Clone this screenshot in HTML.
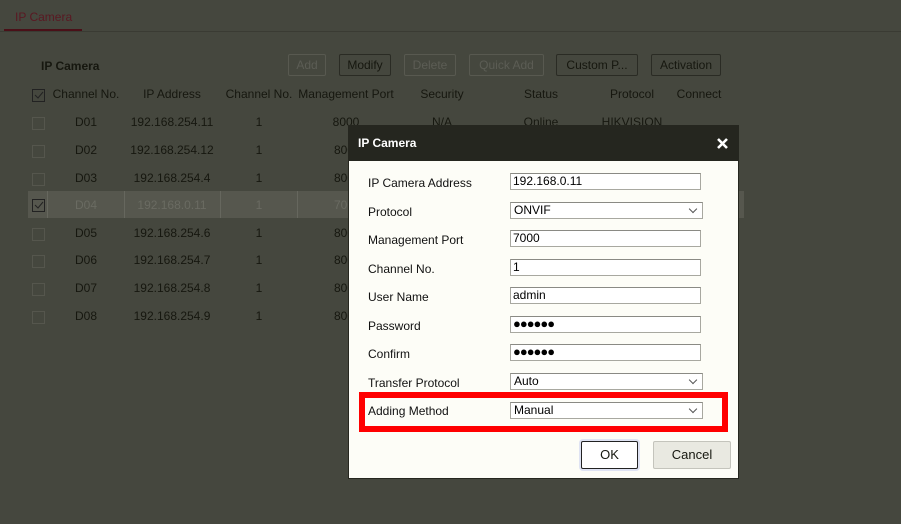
<!DOCTYPE html>
<html><head><style>
*{margin:0;padding:0;box-sizing:border-box}
body{width:901px;height:524px;background:#45473e;font-family:"Liberation Sans",sans-serif;font-size:12px;color:#16170f;position:relative;overflow:hidden}
.a{position:absolute;white-space:nowrap}
.c{position:absolute;transform:translateX(-50%);white-space:nowrap}
.btn{position:absolute;height:22px;top:54px;border:1px solid #2a2b24;border-radius:2px;text-align:center;line-height:20px;font-size:12px}
.dis{border-color:#585950;color:#5c5d55}
.cb{position:absolute;left:32px;width:13px;height:13px;border:1px solid #393a32}
.inp{position:absolute;left:510px;width:191px;height:17px;border:1px solid #a8a8a0;border-top-color:#8a8a84;background:#fff;font-size:12px;line-height:15px;padding-left:2px;color:#000}
.sel{width:193px;padding-left:3px}
.sel::after{content:"";position:absolute;right:6px;top:3px;width:5px;height:5px;border-right:1px solid #555;border-bottom:1px solid #555;transform:rotate(45deg)}
.lbl{position:absolute;left:368px;font-size:12px;color:#111}
.dots{font-size:13px;letter-spacing:-1px;font-weight:bold;line-height:14px}
</style></head><body>
<div class="a" style="left:15px;top:10px;color:#5a1822;font-size:12px">IP Camera</div>
<div class="a" style="left:0;top:31px;width:901px;height:1px;background:#3a3b33"></div>
<div class="a" style="left:4px;top:29px;width:78px;height:2px;background:#4a1018"></div>

<div class="a" style="left:41px;top:59px;font-weight:bold">IP Camera</div>
<div class="btn dis" style="left:288px;width:38px">Add</div>
<div class="btn" style="left:339px;width:52px">Modify</div>
<div class="btn dis" style="left:404px;width:52px">Delete</div>
<div class="btn dis" style="left:469px;width:75px">Quick Add</div>
<div class="btn" style="left:556px;width:82px">Custom P...</div>
<div class="btn" style="left:651px;width:70px">Activation</div>

<div class="cb" style="top:89px;border-color:#222"><svg width="11" height="11" style="position:absolute;left:0;top:0"><path d="M2 5 L5 8 L10 2" stroke="#222" fill="none"/></svg></div>
<div class="c" style="left:86px;top:87px">Channel No.</div>
<div class="c" style="left:172px;top:87px">IP Address</div>
<div class="c" style="left:259px;top:87px">Channel No.</div>
<div class="c" style="left:346px;top:87px">Management Port</div>
<div class="c" style="left:442px;top:87px">Security</div>
<div class="c" style="left:541px;top:87px">Status</div>
<div class="c" style="left:632px;top:87px">Protocol</div>
<div class="c" style="left:699px;top:87px">Connect</div>

<div class="a" style="left:28px;top:191px;width:716px;height:27px;background:#56574e"></div>
<div class="a" style="left:47px;top:191px;width:1px;height:27px;background:#66675e"></div>
<div class="a" style="left:124px;top:191px;width:1px;height:27px;background:#66675e"></div>
<div class="a" style="left:220px;top:191px;width:1px;height:27px;background:#66675e"></div>
<div class="a" style="left:297px;top:191px;width:1px;height:27px;background:#66675e"></div>

<div class="cb" style="top:117px;border-color:#55564d"></div>
<div class="c" style="left:86px;top:115px">D01</div><div class="c" style="left:172px;top:115px">192.168.254.11</div><div class="c" style="left:259px;top:115px">1</div><div class="c" style="left:346px;top:115px">8000</div><div class="c" style="left:442px;top:115px">N/A</div><div class="c" style="left:541px;top:115px">Online</div><div class="c" style="left:632px;top:115px">HIKVISION</div>
<div class="cb" style="top:145px;border-color:#55564d"></div>
<div class="c" style="left:86px;top:143px">D02</div><div class="c" style="left:172px;top:143px">192.168.254.12</div><div class="c" style="left:259px;top:143px">1</div><div class="a" style="left:334px;top:143px">8000</div>
<div class="cb" style="top:173px;border-color:#55564d"></div>
<div class="c" style="left:86px;top:171px">D03</div><div class="c" style="left:172px;top:171px">192.168.254.4</div><div class="c" style="left:259px;top:171px">1</div><div class="a" style="left:334px;top:171px">8000</div>
<div class="cb" style="top:199px;border-color:#222"><svg width="11" height="11" style="position:absolute;left:0;top:0"><path d="M2 5 L5 8 L10 2" stroke="#222" fill="none"/></svg></div>
<div class="c" style="left:86px;top:198px;color:#6a6b62">D04</div><div class="c" style="left:172px;top:198px;color:#6a6b62">192.168.0.11</div><div class="c" style="left:259px;top:198px;color:#6a6b62">1</div><div class="a" style="left:334px;top:198px;color:#6a6b62">7000</div>
<div class="cb" style="top:228px;border-color:#55564d"></div>
<div class="c" style="left:86px;top:226px">D05</div><div class="c" style="left:172px;top:226px">192.168.254.6</div><div class="c" style="left:259px;top:226px">1</div><div class="a" style="left:334px;top:226px">8000</div>
<div class="cb" style="top:255px;border-color:#55564d"></div>
<div class="c" style="left:86px;top:253px">D06</div><div class="c" style="left:172px;top:253px">192.168.254.7</div><div class="c" style="left:259px;top:253px">1</div><div class="a" style="left:334px;top:253px">8000</div>
<div class="cb" style="top:283px;border-color:#55564d"></div>
<div class="c" style="left:86px;top:281px">D07</div><div class="c" style="left:172px;top:281px">192.168.254.8</div><div class="c" style="left:259px;top:281px">1</div><div class="a" style="left:334px;top:281px">8000</div>
<div class="cb" style="top:311px;border-color:#55564d"></div>
<div class="c" style="left:86px;top:309px">D08</div><div class="c" style="left:172px;top:309px">192.168.254.9</div><div class="c" style="left:259px;top:309px">1</div><div class="a" style="left:334px;top:309px">8000</div>

<!-- dialog -->
<div class="a" style="left:348px;top:125px;width:391px;height:354px;background:#fdfdf7;border:1px solid #26271f"></div>
<div class="a" style="left:348px;top:125px;width:391px;height:36px;background:#25261f"></div>
<div class="a" style="left:358px;top:136px;color:#fff;font-weight:bold;font-size:12px">IP Camera</div>
<svg class="a" style="left:716px;top:137px" width="13" height="13"><path d="M2 2 L11 11 M11 2 L2 11" stroke="#fff" stroke-width="2.6"/></svg>

<div class="lbl" style="top:176px">IP Camera Address</div><div class="inp" style="top:173px">192.168.0.11</div>
<div class="lbl" style="top:205px">Protocol</div><div class="inp sel" style="top:202px">ONVIF</div>
<div class="lbl" style="top:233px">Management Port</div><div class="inp" style="top:230px">7000</div>
<div class="lbl" style="top:262px">Channel No.</div><div class="inp" style="top:259px">1</div>
<div class="lbl" style="top:290px">User Name</div><div class="inp" style="top:287px">admin</div>
<div class="lbl" style="top:319px">Password</div><div class="inp dots" style="top:316px">●●●●●●</div>
<div class="lbl" style="top:347px">Confirm</div><div class="inp dots" style="top:344px">●●●●●●</div>
<div class="lbl" style="top:376px">Transfer Protocol</div><div class="inp sel" style="top:373px">Auto</div>
<div class="lbl" style="top:404px">Adding Method</div><div class="inp sel" style="top:402px">Manual</div>
<div class="a" style="left:359px;top:392px;width:369px;height:40px;border:6px solid #f00"></div>

<div class="a" style="left:579px;top:439px;width:61px;height:32px;border-radius:4px;background:#dfe3f3"></div>
<div class="a" style="left:581px;top:441px;width:57px;height:28px;background:#fff;border:1px solid #222;border-radius:2px;text-align:center;line-height:26px;font-size:13px">OK</div>
<div class="a" style="left:653px;top:441px;width:78px;height:28px;background:#e9e9e1;border:1px solid #c4c4bc;border-radius:2px;text-align:center;line-height:26px;font-size:13px">Cancel</div>
</body></html>
